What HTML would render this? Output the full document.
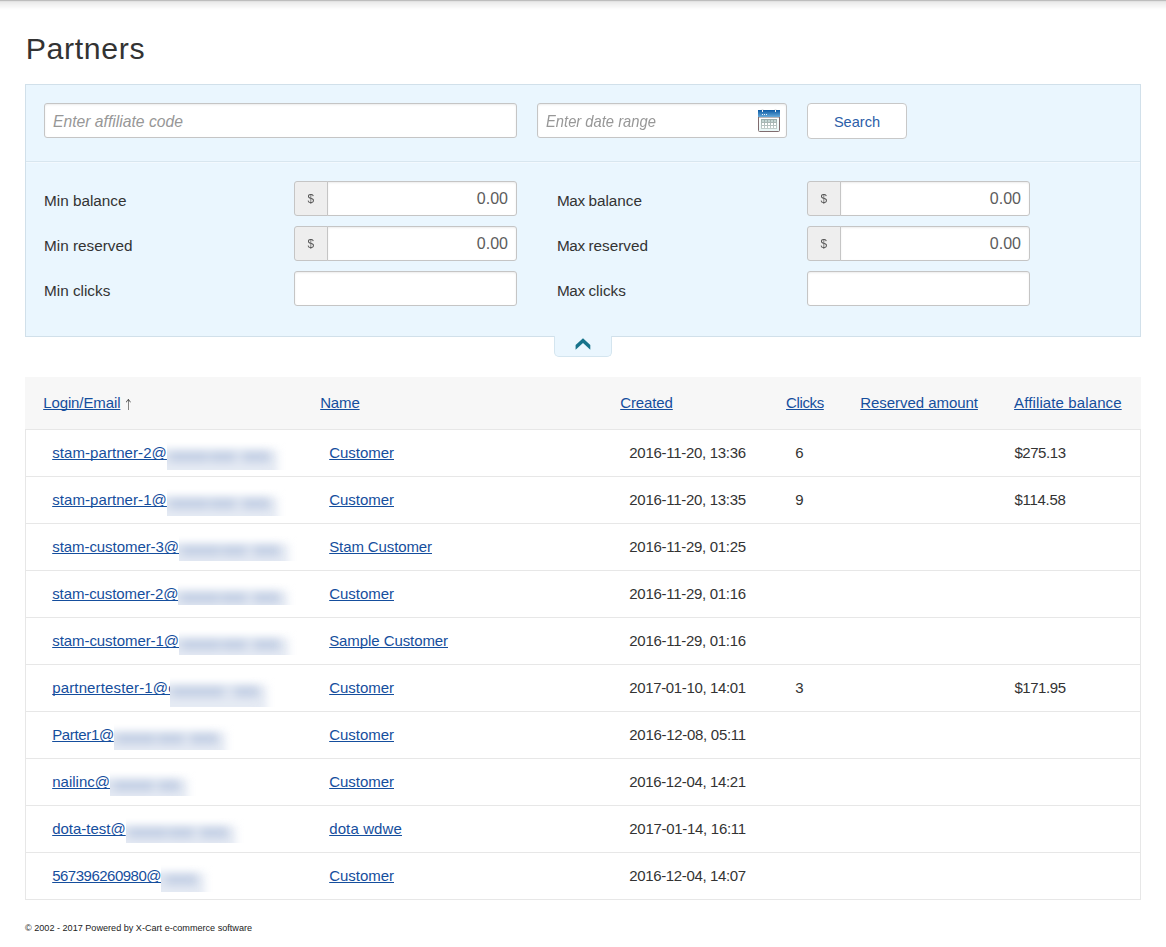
<!DOCTYPE html>
<html lang="en">
<head>
<meta charset="utf-8">
<title>Partners</title>
<style>
*{box-sizing:border-box;margin:0;padding:0}
html,body{width:1166px;height:947px;overflow:hidden;background:#fff}
body{font-family:"Liberation Sans",sans-serif;font-size:15px;color:#333;position:relative}
a{color:#154e9d;text-decoration:underline;text-decoration-skip-ink:none}
.topshadow{position:absolute;left:0;top:0;width:1166px;height:10px;background:linear-gradient(to bottom,#bdbdbd 0px 1px,#e2e2e2 1px 2px,#ebebeb 2px 3px,#eeeeee 3px 4px,#f1f1f1 4px 5px,#f4f4f4 5px 6px,#f6f6f6 6px 7px,#f9f9f9 7px 8px,#fcfcfc 8px 9px,#fefefe 9px 10px)}
h1{position:absolute;left:25.7px;top:31px;font-size:30.3px;font-weight:normal;letter-spacing:.65px;color:#333;line-height:36px;white-space:nowrap}
.panel{position:absolute;left:25px;top:84px;width:1116px;height:253px;background:#eaf6fe;border:1px solid #d1e0ea}
.panel .divider{position:absolute;left:0;top:76px;width:1114px;height:2px;background:linear-gradient(to bottom,#d8e6ef 0 1px,#f3f9fe 1px 2px)}
.inp{position:absolute;height:35px;background:#fff;border:1px solid #c5c5c5;border-radius:3px;box-shadow:inset 0 1px 2px rgba(0,0,0,.08)}
.ph{position:absolute;left:8px;top:1px;line-height:33px;font-style:italic;font-size:15.7px;color:#979797;white-space:nowrap}
.btn{position:absolute;left:807px;top:103px;width:100px;height:36px;background:#fff;border:1px solid #c8c8c8;border-radius:4px;text-align:center;line-height:36px;color:#2c5ea8;font-size:14.6px}
.lbl{position:absolute;font-size:15.3px;color:#333;white-space:nowrap;line-height:20px}
.mx{letter-spacing:-.43px}
.cur{position:absolute;width:34px;height:35px;background:#eee;border:1px solid #c5c5c5;border-radius:3px 0 0 3px;text-align:center;line-height:33px;color:#555;font-size:13.5px}
.num{position:absolute;right:8px;top:1px;line-height:31px;font-size:16px;color:#5c5c5c}
.tab{position:absolute;left:554px;top:336px;width:58px;height:21px;background:#eaf6fe;border:1px solid #d4e5ef;border-top:none;border-radius:0 0 5px 5px}
.tab svg{position:absolute;left:-1px;top:0}
.thead{position:absolute;left:25px;top:377px;width:1116px;height:53px;background:#f7f7f7}
.th{position:absolute;top:0;line-height:52px;white-space:nowrap}
.tbody{position:absolute;left:25px;top:429px;width:1116px;height:471px;border:1px solid #e7e7e7}
.row{position:absolute;left:0;width:1114px;height:47px;border-bottom:1px solid #e7e7e7}
.row:last-child{border-bottom:none}
.c{position:absolute;top:0;line-height:46px;white-space:nowrap}
.blur{position:absolute;top:12px;overflow:hidden;background:#fff}
.blur u{position:absolute;left:-14px;top:8px;height:40px;background:#e6ebf4;filter:blur(4.5px);text-decoration:none}
.blur s{position:absolute;left:0;top:0;width:100%;height:40px;filter:blur(4px);text-decoration:none}
.blur s b{position:absolute;left:-10px;top:9px;height:12px;background:#dce3ef}
.blur s i{position:absolute;top:10px;height:10px;background:#c3cfe4;border-radius:3px}
.arr{font-family:"DejaVu Sans",sans-serif;font-weight:200;font-size:15px;color:#333;position:relative;display:inline-block;left:-2.4px;top:1.8px;transform:scaleX(.8);line-height:1}
.foot{position:absolute;left:25px;top:922px;font-size:9.1px;color:#222;line-height:12px;white-space:nowrap}
</style>
</head>
<body>
<div class="topshadow"></div>
<h1>Partners</h1>

<div class="panel">
  <div class="divider"></div>
</div>

<div class="inp" style="left:44px;top:103px;width:473px"><span class="ph">Enter affiliate code</span></div>
<div class="inp" style="left:537px;top:103px;width:250px"><span class="ph" style="transform:scaleX(.94);transform-origin:0 50%">Enter date range</span>
<svg style="position:absolute;left:220px;top:5px" width="22" height="24" viewBox="0 0 22 24">
<defs><linearGradient id="cg" x1="0" y1="0" x2="0" y2="1"><stop offset="0" stop-color="#0a58a4"/><stop offset="1" stop-color="#67aad9"/></linearGradient>
<linearGradient id="cgr" x1="0" y1="0" x2="0" y2="1"><stop offset="0" stop-color="#9aaaa8"/><stop offset="1" stop-color="#c2cecc"/></linearGradient>
<linearGradient id="cb" x1="0" y1="0" x2="0" y2="1"><stop offset="0" stop-color="#ffffff"/><stop offset="1" stop-color="#e6f6f6"/></linearGradient></defs>
<path d="M.5 8 V21.5 Q.5 22.5 1.5 22.5 H20.5 Q21.5 22.5 21.5 21.5 V8 Z" fill="url(#cb)" stroke="#806c6f" stroke-width="1"/>
<rect x="0" y="1" width="22" height="7" fill="url(#cg)"/>
<rect x="4" y="0" width="1" height="3" fill="#f3f3f3"/><rect x="17" y="0" width="1" height="3" fill="#f3f3f3"/>
<rect x="3.5" y="0" width="2" height="1" fill="#d9d9d9" opacity=".7"/><rect x="16.5" y="0" width="2" height="1" fill="#d9d9d9" opacity=".7"/>
<rect x="4" y="5" width="1" height="1" fill="#e8f1fa"/><rect x="6" y="5" width="1" height="1" fill="#e8f1fa"/><rect x="8" y="5" width="1" height="1" fill="#e8f1fa"/>
<rect x="3" y="10" width="16" height="10" fill="url(#cgr)"/>
<g fill="#c3d5d3"><rect x="4" y="11" width="2" height="2"/><rect x="7" y="11" width="2" height="2"/><rect x="10" y="11" width="2" height="2"/><rect x="13" y="11" width="2" height="2"/><rect x="16" y="11" width="2" height="2"/></g>
<g fill="#fff"><rect x="4" y="14" width="2" height="2"/><rect x="7" y="14" width="2" height="2"/><rect x="10" y="14" width="2" height="2"/><rect x="13" y="14" width="2" height="2"/><rect x="16" y="14" width="2" height="2"/>
<rect x="4" y="17" width="2" height="2"/><rect x="7" y="17" width="2" height="2"/><rect x="10" y="17" width="2" height="2"/><rect x="13" y="17" width="2" height="2"/><rect x="16" y="17" width="2" height="2"/></g>
</svg></div>
<div class="btn">Search</div>

<div class="lbl" style="left:44px;top:191px">Min balance</div>
<div class="lbl" style="left:44px;top:236px">Min reserved</div>
<div class="lbl" style="left:44px;top:281px">Min clicks</div>
<div class="lbl" style="left:557px;top:191px"><span class="mx">Max </span>balance</div>
<div class="lbl" style="left:557px;top:236px"><span class="mx">Max </span>reserved</div>
<div class="lbl" style="left:557px;top:281px"><span class="mx">Max </span>clicks</div>

<div class="cur" style="left:294px;top:181px"><span style="display:inline-block;transform:scaleX(.88)">$</span></div>
<div class="inp" style="left:327px;top:181px;width:190px;border-radius:0 3px 3px 0"><span class="num">0.00</span></div>
<div class="cur" style="left:294px;top:226px"><span style="display:inline-block;transform:scaleX(.88)">$</span></div>
<div class="inp" style="left:327px;top:226px;width:190px;border-radius:0 3px 3px 0"><span class="num">0.00</span></div>
<div class="inp" style="left:294px;top:271px;width:223px"></div>

<div class="cur" style="left:807px;top:181px"><span style="display:inline-block;transform:scaleX(.88)">$</span></div>
<div class="inp" style="left:840px;top:181px;width:190px;border-radius:0 3px 3px 0"><span class="num">0.00</span></div>
<div class="cur" style="left:807px;top:226px"><span style="display:inline-block;transform:scaleX(.88)">$</span></div>
<div class="inp" style="left:840px;top:226px;width:190px;border-radius:0 3px 3px 0"><span class="num">0.00</span></div>
<div class="inp" style="left:807px;top:271px;width:223px"></div>

<div class="tab"><svg width="58" height="21" viewBox="0 0 58 21"><path d="M29 2.3 L21.6 9.1 V13.7 L29 7.0 L36.3 13.7 V9.1 Z" fill="#17738b"/></svg></div>

<div class="thead">
  <div class="th" style="left:18.2px"><a style="letter-spacing:-0.108px">Login/Email</a> <span class="arr">&#8593;</span></div>
  <div class="th" style="left:295.2px"><a style="letter-spacing:-0.154px">Name</a></div>
  <div class="th" style="left:595.2px"><a style="letter-spacing:-0.111px">Created</a></div>
  <div class="th" style="left:761.1px"><a style="letter-spacing:-0.383px">Clicks</a></div>
  <div class="th" style="left:835.3px"><a style="letter-spacing:-0.054px">Reserved amount</a></div>
  <div class="th" style="left:989.1px"><a style="letter-spacing:0.115px">Affiliate balance</a></div>
</div>

<div class="tbody">
  <div class="row" style="top:0px"><div class="c" style="left:26.2px"><a style="letter-spacing:0.074px">stam-partner-2@</a></div><div class="blur" style="left:140.9px;width:143.1px;height:27.6px"><u style="width:125.1px"></u><s><b style="width:112.1px"></b><i style="left:3.0px;width:38.2px"></i><i style="left:43.3px;width:24.7px"></i><i style="left:76.3px;width:26.8px"></i></s></div><div class="c" style="left:303.2px"><a style="letter-spacing:-0.029px">Customer</a></div><div class="c" style="left:603.3px;letter-spacing:-0.294px">2016-11-20, 13:36</div><div class="c" style="left:769.3px">6</div><div class="c" style="left:988.4px;letter-spacing:-0.433px">$275.13</div></div>
  <div class="row" style="top:47px"><div class="c" style="left:26.2px"><a style="letter-spacing:0.074px">stam-partner-1@</a></div><div class="blur" style="left:140.9px;width:143.1px;height:27.4px"><u style="width:125.1px"></u><s><b style="width:112.1px"></b><i style="left:3.0px;width:38.2px"></i><i style="left:43.3px;width:24.7px"></i><i style="left:76.3px;width:26.8px"></i></s></div><div class="c" style="left:303.2px"><a style="letter-spacing:-0.029px">Customer</a></div><div class="c" style="left:603.3px;letter-spacing:-0.294px">2016-11-20, 13:35</div><div class="c" style="left:769.3px">9</div><div class="c" style="left:988.4px;letter-spacing:-0.273px">$114.58</div></div>
  <div class="row" style="top:94px"><div class="c" style="left:26.2px"><a style="letter-spacing:-0.059px">stam-customer-3@</a></div><div class="blur" style="left:153.0px;width:141.5px;height:24.5px"><u style="width:123.5px"></u><s><b style="width:110.5px"></b><i style="left:3.0px;width:37.6px"></i><i style="left:42.6px;width:24.4px"></i><i style="left:75.1px;width:26.4px"></i></s></div><div class="c" style="left:303.2px"><a style="letter-spacing:-0.108px">Stam Customer</a></div><div class="c" style="left:603.3px;letter-spacing:-0.294px">2016-11-29, 01:25</div></div>
  <div class="row" style="top:141px"><div class="c" style="left:26.2px"><a style="letter-spacing:-0.103px">stam-customer-2@</a></div><div class="blur" style="left:152.3px;width:142.2px;height:21.8px"><u style="width:124.2px"></u><s><b style="width:111.2px"></b><i style="left:3.0px;width:37.9px"></i><i style="left:42.9px;width:24.5px"></i><i style="left:75.6px;width:26.6px"></i></s></div><div class="c" style="left:303.2px"><a style="letter-spacing:-0.029px">Customer</a></div><div class="c" style="left:603.3px;letter-spacing:-0.294px">2016-11-29, 01:16</div></div>
  <div class="row" style="top:188px"><div class="c" style="left:26.2px"><a style="letter-spacing:-0.059px">stam-customer-1@</a></div><div class="blur" style="left:153.0px;width:141.5px;height:25.4px"><u style="width:123.5px"></u><s><b style="width:110.5px"></b><i style="left:3.0px;width:37.6px"></i><i style="left:42.6px;width:24.4px"></i><i style="left:75.1px;width:26.4px"></i></s></div><div class="c" style="left:303.2px"><a style="letter-spacing:-0.083px">Sample Customer</a></div><div class="c" style="left:603.3px;letter-spacing:-0.294px">2016-11-29, 01:16</div></div>
  <div class="row" style="top:235px"><div class="c" style="left:26.2px"><a style="letter-spacing:0.149px">partnertester-1@c</a></div><div class="blur" style="left:144.0px;width:128.5px;height:30.4px"><u style="width:110.5px"></u><s><b style="width:97.5px"></b><i style="left:2.0px;width:51.1px"></i><i style="left:65.0px;width:23.5px"></i></s></div><div class="c" style="left:303.2px"><a style="letter-spacing:-0.029px">Customer</a></div><div class="c" style="left:603.3px;letter-spacing:-0.359px">2017-01-10, 14:01</div><div class="c" style="left:769.3px">3</div><div class="c" style="left:988.4px;letter-spacing:-0.433px">$171.95</div></div>
  <div class="row" style="top:282px"><div class="c" style="left:26.2px"><a style="letter-spacing:-0.353px">Parter1@</a></div><div class="blur" style="left:87.8px;width:144.2px;height:25.5px"><u style="width:126.2px"></u><s><b style="width:113.2px"></b><i style="left:3.0px;width:38.7px"></i><i style="left:43.8px;width:25.0px"></i><i style="left:77.1px;width:27.1px"></i></s></div><div class="c" style="left:303.2px"><a style="letter-spacing:-0.029px">Customer</a></div><div class="c" style="left:603.3px;letter-spacing:-0.294px">2016-12-08, 05:11</div></div>
  <div class="row" style="top:329px"><div class="c" style="left:26.2px"><a style="letter-spacing:0.004px">nailinc@</a></div><div class="blur" style="left:84.0px;width:110.0px;height:24.8px"><u style="width:92.0px"></u><s><b style="width:79.0px"></b><i style="left:4.0px;width:39.4px"></i><i style="left:49.0px;width:21.0px"></i></s></div><div class="c" style="left:303.2px"><a style="letter-spacing:-0.029px">Customer</a></div><div class="c" style="left:603.3px;letter-spacing:-0.359px">2016-12-04, 14:21</div></div>
  <div class="row" style="top:376px"><div class="c" style="left:26.2px"><a style="letter-spacing:-0.009px">dota-test@</a></div><div class="blur" style="left:99.7px;width:142.3px;height:25.4px"><u style="width:124.3px"></u><s><b style="width:111.3px"></b><i style="left:3.0px;width:37.9px"></i><i style="left:43.0px;width:24.6px"></i><i style="left:75.7px;width:26.6px"></i></s></div><div class="c" style="left:303.2px"><a style="letter-spacing:0.120px">dota wdwe</a></div><div class="c" style="left:603.3px;letter-spacing:-0.294px">2017-01-14, 16:11</div></div>
  <div class="row" style="top:423px"><div class="c" style="left:26.2px"><a style="letter-spacing:-0.503px">567396260980@</a></div><div class="blur" style="left:135.0px;width:76.0px;height:27.0px"><u style="width:58.0px"></u><s><b style="width:45.0px"></b><i style="left:5.0px;width:31.0px"></i></s></div><div class="c" style="left:303.2px"><a style="letter-spacing:-0.029px">Customer</a></div><div class="c" style="left:603.3px;letter-spacing:-0.359px">2016-12-04, 14:07</div></div>
</div>

<div class="foot">&copy; 2002 - 2017 Powered by X-Cart e-commerce software</div>
</body>
</html>
